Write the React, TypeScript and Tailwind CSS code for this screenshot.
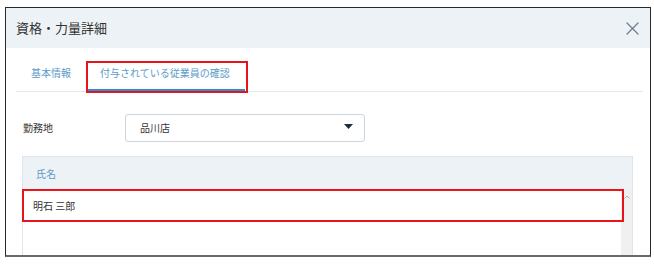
const font = { fontFamily: '"Noto Sans CJK JP", "Noto Sans", sans-serif' };

function CloseIcon() {
  return (
    <svg width="13" height="13" viewBox="0 0 13 13" fill="none" aria-hidden="true">
      <path d="M1 1L12 12M12 1L1 12" stroke="#6f7f8f" strokeWidth="1.3" strokeLinecap="round" />
    </svg>
  );
}

export default function App() {
  return (
    <div className="h-[264px] w-[654px] bg-white pl-[5px] pt-[7px]" style={font}>
      <div className="h-[250px] w-[646px] overflow-hidden border border-b-2 border-[#2a2a2a] border-b-[#6a6a6a] bg-white">
        {/* Header */}
        <div className="flex h-[40px] items-center justify-between bg-[#edf2f6] pl-[10px] pr-[11px]">
          <h2 className="text-[13px] leading-[18px] text-[#333]">資格・力量詳細</h2>
          <CloseIcon />
        </div>

        {/* Tabs */}
        <div className="ml-[10px] mr-[7px] mt-[14px] flex border-b border-[#e3e8ec]">
          <div className="border-b-2 border-transparent pb-[8px] pl-[15px] pr-[16px] pt-[3px] text-[10px] leading-[16px] text-[#5b9bc8]">
            基本情報
          </div>
          <div className="relative">
            <div className="border-b-2 border-[#2b8fd6] pb-[8px] pl-[13px] pr-[15px] pt-[3px] text-[10px] leading-[16px] text-[#5b9bc8]">
              付与されている従業員の確認
            </div>
            <span className="pointer-events-none absolute -bottom-[2px] -left-[1px] -right-[3px] -top-[1px] border-2 border-[#e8141b]" />
          </div>
        </div>

        {/* Location */}
        <div className="ml-[17px] mt-[22px] flex items-center">
          <span className="w-[102px] text-[10px] leading-[16px] text-[#333]">勤務地</span>
          <div className="flex h-[28px] w-[240px] items-center justify-between rounded-[3px] border border-[#c9d6df] pl-[14px] pr-[11px]">
            <span className="text-[10px] leading-[16px] text-[#333]">品川店</span>
            <svg width="9" height="5" viewBox="0 0 9 5" aria-hidden="true" className="-mt-[3px]">
              <path d="M0 0H9L4.5 5Z" fill="#1f2d3d" />
            </svg>
          </div>
        </div>

        {/* Table */}
        <div className="ml-[16px] mt-[14px] w-[611px] border border-[#dfe5ea]">
          <div className="flex h-[32px] items-center bg-[#edf2f6] pl-[13px] text-[10px] text-[#5b9bc8]">氏名</div>
          <div className="flex h-[80px]">
            <div className="relative flex-1">
              <div className="flex h-[32px] items-center pl-[10px] text-[10px] text-[#333]">明石 三郎</div>
              <span className="pointer-events-none absolute -left-[1px] -right-[3px] top-0 h-[33px] border-2 border-[#e8141b]" />
            </div>
            <div className="flex w-[11px] justify-center bg-[#f0f0f0] pt-[6px]">
              <svg width="6" height="4" viewBox="0 0 6 4" aria-hidden="true">
                <path d="M0.5 3.5L3 1L5.5 3.5" stroke="#b5b5b5" strokeWidth="1" fill="none" />
              </svg>
            </div>
          </div>
        </div>
      </div>
    </div>
  );
}
